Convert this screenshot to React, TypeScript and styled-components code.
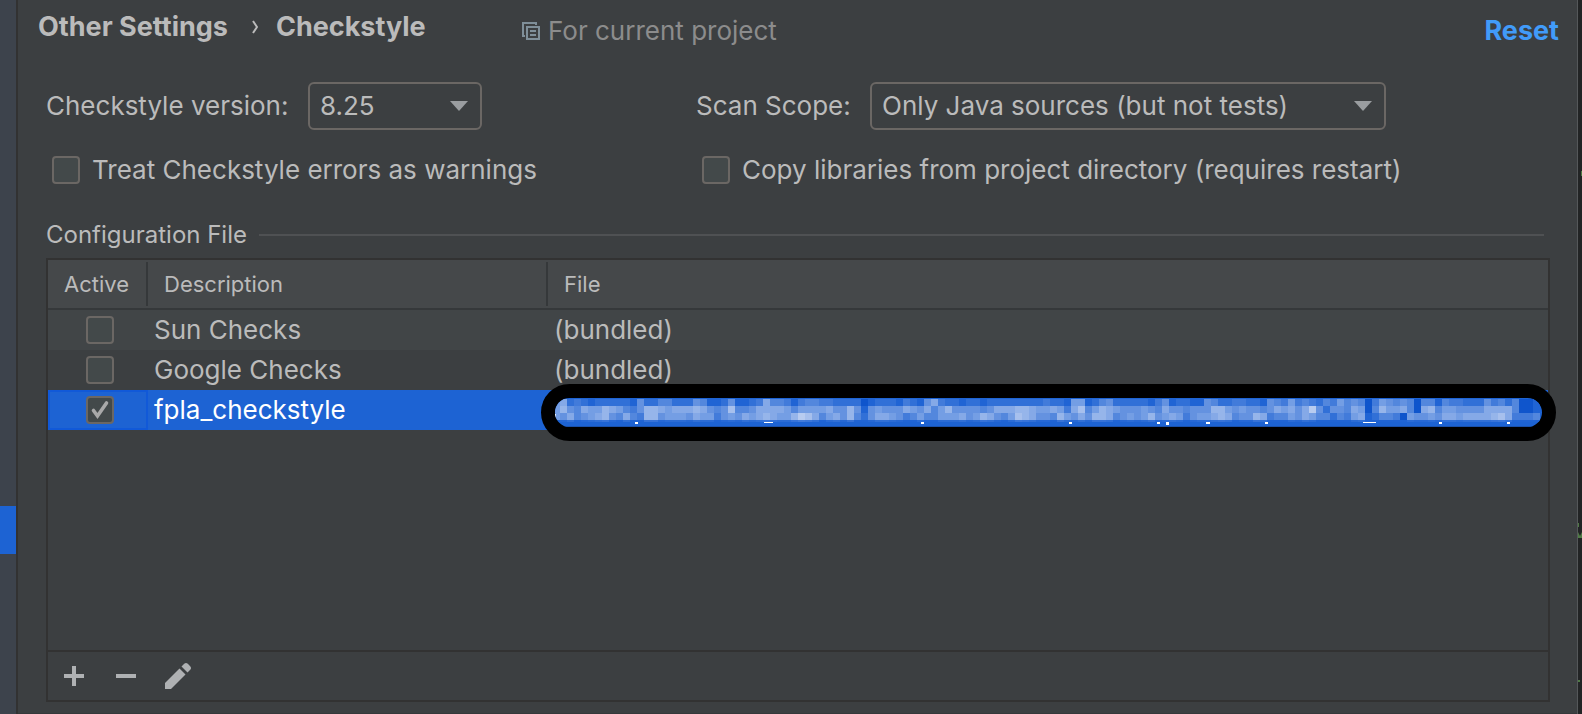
import React from "react";
import styled, { createGlobalStyle, css } from "styled-components";

const color = {
  panel: "#3c3f41",
  side: "#3d434c",
  line: "#323232",
  accent: "#1d63d3",
  text: "#bbbbbb",
  muted: "#8c8c8c",
  field: "#6b6764",
  box: "#43494a",
};

const GlobalStyle = createGlobalStyle`
  *, *::before, *::after { box-sizing: border-box; }
  body {
    margin: 0;
    background: ${color.panel};
    color: ${color.text};
    font-family: Inter, "Liberation Sans", sans-serif;
    font-size: 26px;
    line-height: 32px;
  }
  button, select, input { font: inherit; color: inherit; margin: 0; }
`;

const Window = styled.div`
  display: flex;
  min-height: 100vh;
`;

const Sidebar = styled.nav`
  flex: 0 0 18px;
  padding-top: 506px;
  background: ${color.side};
  border-right: 2px solid ${color.line};
`;

const SidebarSelection = styled.div`
  height: 48px;
  background: ${color.accent};
`;

const Main = styled.main`
  flex: 1;
  min-width: 0;
  display: flex;
  flex-direction: column;
  padding: 11px 27px 11px 28px;
  border-bottom: 1px solid #35383a;
`;

const EditorEdge = styled.div`
  flex: 0 0 5px;
  background: #222425;
  border-left: 1px solid #55585a;
  > svg { display: block; }
`;

const Header = styled.header`
  display: flex;
  align-items: flex-start;
  margin: 0 -9px 0 -8px;
`;

const Breadcrumb = styled.h1`
  flex: 0 0 484px;
  display: flex;
  align-items: center;
  margin: 0;
  font-size: 27px;
  font-weight: 700;
`;

const Chevron = styled.svg`
  margin: 0 18px 0 24px;
`;

const ProjectHint = styled.div`
  flex: 1;
  display: flex;
  align-items: center;
  gap: 8px;
  padding-top: 4px;
  color: ${color.muted};
`;

const ResetButton = styled.button`
  padding: 4px 0 0;
  border: 0;
  background: none;
  color: #419bf9;
  font-size: 27px;
  font-weight: 700;
`;

const Options = styled.div`
  display: grid;
  grid-template-columns: 650px 1fr;
  row-gap: 24px;
  margin-top: 35px;
`;

const Field = styled.div`
  display: flex;
  align-items: center;
  white-space: nowrap;
`;

const FieldLabel = styled.label<{ $width: number }>`
  flex: 0 0 ${(p) => p.$width}px;
`;

const SelectBox = styled.div<{ $width: number }>`
  display: grid;
  align-items: center;
  justify-items: end;
  flex: 0 0 ${(p) => p.$width}px;
  > * { grid-area: 1 / 1; }
`;

const Select = styled.select`
  appearance: none;
  width: 100%;
  height: 48px;
  padding: 0 10px;
  background: transparent;
  border: 2px solid ${color.field};
  border-radius: 6px;
`;

const Arrow = styled.svg`
  margin-right: 14px;
  pointer-events: none;
`;

const CheckLabel = styled.label`
  display: flex;
  align-items: center;
  gap: 12px;
  padding-left: 6px;
  white-space: nowrap;
`;

const CheckFrame = styled.span`
  display: inline-grid;
  place-items: center;
  > * { grid-area: 1 / 1; }
`;

const CheckInput = styled.input`
  appearance: none;
  width: 28px;
  height: 28px;
  background: ${color.box};
  border: 2px solid ${color.field};
  border-radius: 4px;
`;

const SectionTitle = styled.h2`
  display: flex;
  align-items: center;
  gap: 12px;
  margin: 32px -4px 0 0;
  padding-right: 10px;
  font-size: 24px;
  font-weight: 400;
  line-height: 34px;
  &::after {
    content: "";
    flex: 1;
    height: 2px;
    background: #4f5153;
  }
`;

const TablePanel = styled.section`
  flex: 1;
  display: flex;
  flex-direction: column;
  margin-top: 6px;
  border: 2px solid ${color.line};
`;

const TableArea = styled.div`
  flex: 1;
`;

const Table = styled.table`
  width: 100%;
  table-layout: fixed;
  border-collapse: collapse;
`;

const HeadCell = styled.th<{ $width?: number }>`
  width: ${(p) => (p.$width ? `${p.$width}px` : "auto")};
  height: 50px;
  padding: 2px 0;
  background: #45484a;
  box-shadow: inset 0 -2px 0 #35383a;
  font-size: 22px;
  font-weight: 400;
  text-align: left;
  vertical-align: top;
  > span {
    display: block;
    line-height: 44px;
    padding-left: 16px;
    border-right: ${(p) => (p.$width ? "2px solid #35383a" : "0")};
  }
`;

const Row = styled.tr<{ $selected?: boolean }>`
  height: 40px;
  &:nth-child(odd) { background: #414547; }
  ${(p) =>
    p.$selected &&
    css`
      && { background: ${color.accent}; color: #ffffff; }
      > td:first-child { box-shadow: inset 0 0 0 2px #1159d8; }
    `}
`;

const Cell = styled.td<{ $center?: boolean }>`
  position: relative;
  height: 40px;
  padding: 0 6px;
  line-height: 28px;
  text-align: ${(p) => (p.$center ? "center" : "left")};
  ${CheckFrame} { vertical-align: top; margin-left: 4px; }
`;

const Redaction = styled.div`
  position: absolute;
  inset: -6px -8px -11px -7px;
  border: 14px solid #000000;
  border-radius: 29px;
  background: ${color.accent};
  overflow: hidden;
  > svg { display: block; width: 100%; height: 100%; }
`;

const Toolbar = styled.div`
  display: flex;
  align-items: center;
  gap: 12px;
  height: 50px;
  padding-left: 6px;
  border-top: 2px solid ${color.line};
`;

const ToolButton = styled.button`
  display: grid;
  place-items: center;
  width: 40px;
  height: 40px;
  padding: 0;
  border: 0;
  background: none;
`;

// Brightness of each 7px block of the pixelated path, one array per block row.
const levels: number[][] = [
  [6,1,2,1,0,1,1,1,1,1,0,4,1,1,3,3,1,1,1,4,3,0,0,1,4,0,0,1,2,6,3,3,2,0,2,3,3,2,2,1,1,1,1,-1,0,1,
   1,1,0,2,1,0,4,6,2,1,1,0,1,1,0,1,1,1,1,1,1,1,1,2,1,1,0,5,5,0,1,3,4,1,1,1,1,1,0,2,4,0,1,1,0,0,4,3,1,1,
   2,2,1,1,0,4,3,2,5,2,3,2,1,3,2,5,3,4,3,-2,2,5,4,3,4,3,-2,3,3,0,3,2,2,1,1,1,4,2,3,1,3,-1,-1,0],
  [7,4,3,6,5,5,7,6,5,3,2,4,7,7,6,5,6,6,6,7,6,4,3,4,8,3,3,4,6,6,6,6,5,3,5,5,5,5,6,4,4,7,4,0,4,5,
   4,4,4,6,5,4,6,3,5,7,4,4,4,4,3,4,6,6,6,7,7,6,5,5,6,5,2,6,8,3,5,7,6,5,4,4,4,5,4,3,6,4,4,3,4,4,4,7,7,5,
   4,5,4,4,3,4,6,5,6,4,6,9,4,1,4,4,3,6,5,-2,3,7,5,5,6,3,-2,6,7,3,5,5,4,4,4,4,6,6,6,6,3,-1,-1,0],
  [4,6,3,4,5,6,7,4,3,6,3,2,7,7,4,5,5,5,4,6,5,5,2,4,5,4,6,5,6,7,6,5,5,7,9,8,6,3,5,6,4,7,3,1,4,6,
   6,5,4,2,3,5,3,3,5,5,5,6,4,5,7,6,4,3,5,8,7,6,4,4,3,7,5,4,6,4,7,7,6,3,4,5,4,5,7,4,5,6,5,2,4,5,5,6,7,6,
   3,4,4,7,6,2,3,3,5,4,6,5,3,3,1,3,2,5,6,0,1,3,3,2,-1,5,4,4,5,4,6,6,5,6,6,6,6,7,8,6,2,2,2,3],
];

const shade = (level: number) => {
  if (level < 0) return "#0f55cc";
  const t = level / 9;
  const mix = (a: number, b: number) => Math.round(a + (b - a) * t);
  return `rgb(${mix(32, 184)}, ${mix(100, 204)}, ${mix(212, 240)})`;
};

// Descenders and underscores that show below the blocks: x, y, width, height.
const strokes = [
  [80, 24, 3, 2], [209, 24, 9, 1], [366, 24, 3, 2], [514, 24, 3, 2],
  [602, 24, 3, 2], [611, 24, 3, 3], [651, 24, 4, 2], [710, 24, 3, 2],
  [808, 24, 13, 1], [884, 24, 3, 2], [952, 24, 3, 2], [0, 16, 1, 5],
];

function PixelatedPath() {
  return (
    <svg viewBox="0 0 987 29" preserveAspectRatio="xMinYMid slice" shapeRendering="crispEdges" aria-hidden="true">
      <rect x={-2} y={1} width={7} height={21} fill={shade(5)} />
      {levels.map((row, r) =>
        row.map((level, i) => (
          <rect key={`${r}-${i}`} x={5 + i * 7} y={1 + r * 7} width={7} height={7} fill={shade(level)} />
        )),
      )}
      {levels[2].map((level, i) => (
        <rect key={i} x={5 + i * 7} y={22} width={7} height={2} fill={shade(Math.max(0, level / 3 - 1))} />
      ))}
      <rect x={0} y={28} width={987} height={1} fill="#1a51ab" />
      {strokes.map(([x, y, w, h]) => (
        <rect key={x} x={x} y={y} width={w} height={h} fill="#ffffff" />
      ))}
    </svg>
  );
}

function Checkbox({ id, label, checked = false }: { id?: string; label?: string; checked?: boolean }) {
  return (
    <CheckFrame>
      <CheckInput type="checkbox" id={id} aria-label={label} defaultChecked={checked} />
      {checked && (
        <svg width="28" height="28" viewBox="0 0 28 28" fill="none" pointerEvents="none" aria-hidden="true">
          <path d="M7.5 14.5L11.5 20L20.5 7" stroke="#a9a9a9" strokeWidth="3.6" strokeLinecap="round" />
        </svg>
      )}
    </CheckFrame>
  );
}

function Dropdown({ id, value, width }: { id: string; value: string; width: number }) {
  return (
    <SelectBox $width={width}>
      <Select id={id} defaultValue={value}>
        <option>{value}</option>
      </Select>
      <Arrow width="18" height="10" viewBox="0 0 18 10" aria-hidden="true">
        <path d="M0 0H18L9 10Z" fill="#9a9da0" />
      </Arrow>
    </SelectBox>
  );
}

const rows = [
  { name: "Sun Checks", file: "(bundled)", active: false },
  { name: "Google Checks", file: "(bundled)", active: false },
  { name: "fpla_checkstyle", file: null, active: true },
];

export default function App() {
  return (
    <>
      <GlobalStyle />
      <Window>
        <Sidebar>
          <SidebarSelection />
        </Sidebar>
        <Main>
          <Header>
            <Breadcrumb>
              <span>Other Settings</span>
              <Chevron width="6" height="14" viewBox="0 0 6 14" fill="none" aria-hidden="true">
                <path d="M1 1L5 7L1 13" stroke="#bbbbbb" strokeWidth="2" />
              </Chevron>
              <span>Checkstyle</span>
            </Breadcrumb>
            <ProjectHint>
              <svg width="18" height="18" viewBox="0 0 18 18" fill="none" stroke="#7f8f99" strokeWidth="2" aria-hidden="true">
                <path d="M14 3V1H1V14H3" />
                <path d="M5 5H17V17H5Z" />
                <path d="M8 9H14M8 13H14" />
              </svg>
              For current project
            </ProjectHint>
            <ResetButton type="button">Reset</ResetButton>
          </Header>
          <Options>
            <Field>
              <FieldLabel htmlFor="version" $width={262}>Checkstyle version:</FieldLabel>
              <Dropdown id="version" value="8.25" width={174} />
            </Field>
            <Field>
              <FieldLabel htmlFor="scope" $width={174}>Scan Scope:</FieldLabel>
              <Dropdown id="scope" value="Only Java sources (but not tests)" width={516} />
            </Field>
            <CheckLabel htmlFor="warnings">
              <Checkbox id="warnings" />
              Treat Checkstyle errors as warnings
            </CheckLabel>
            <CheckLabel htmlFor="copy">
              <Checkbox id="copy" />
              Copy libraries from project directory (requires restart)
            </CheckLabel>
          </Options>
          <SectionTitle>Configuration File</SectionTitle>
          <TablePanel>
            <TableArea>
              <Table>
                <thead>
                  <tr>
                    <HeadCell $width={100}><span>Active</span></HeadCell>
                    <HeadCell $width={400}><span>Description</span></HeadCell>
                    <HeadCell><span>File</span></HeadCell>
                  </tr>
                </thead>
                <tbody>
                  {rows.map((row) => (
                    <Row key={row.name} $selected={row.active}>
                      <Cell $center>
                        <Checkbox label={`${row.name} active`} checked={row.active} />
                      </Cell>
                      <Cell>{row.name}</Cell>
                      <Cell>
                        {row.file ?? (
                          <Redaction>
                            <PixelatedPath />
                          </Redaction>
                        )}
                      </Cell>
                    </Row>
                  ))}
                </tbody>
              </Table>
            </TableArea>
            <Toolbar>
              <ToolButton type="button" aria-label="Add">
                <svg width="20" height="20" viewBox="0 0 20 20"><path d="M8 0H12V8H20V12H12V20H8V12H0V8H8Z" fill="#afb1b3" /></svg>
              </ToolButton>
              <ToolButton type="button" aria-label="Remove">
                <svg width="20" height="20" viewBox="0 0 20 20"><path d="M0 8H20V12H0Z" fill="#afb1b3" /></svg>
              </ToolButton>
              <ToolButton type="button" aria-label="Edit">
                <svg width="26" height="26" viewBox="0 0 26 26" fill="#afb1b3">
                  <path d="M14.5 5.5L20.5 11.5L6 26H0V20Z" />
                  <path d="M16.5 3.5L19.2 0.8Q21 -0.6 22.8 0.8L25.2 3.2Q26.8 5 25.2 6.8L22.5 9.5Z" />
                </svg>
              </ToolButton>
            </Toolbar>
          </TablePanel>
        </Main>
        <EditorEdge>
          <svg width="4" height="700" viewBox="0 0 4 700" fill="#4f7a45" aria-hidden="true">
            <path d="M3 171H4V176H3Z" />
            <path d="M0 523H1V527H0Z" />
            <path d="M0 532L2 536L4 532V538H0Z" />
            <path d="M0 680H2V682H0Z" />
          </svg>
        </EditorEdge>
      </Window>
    </>
  );
}
